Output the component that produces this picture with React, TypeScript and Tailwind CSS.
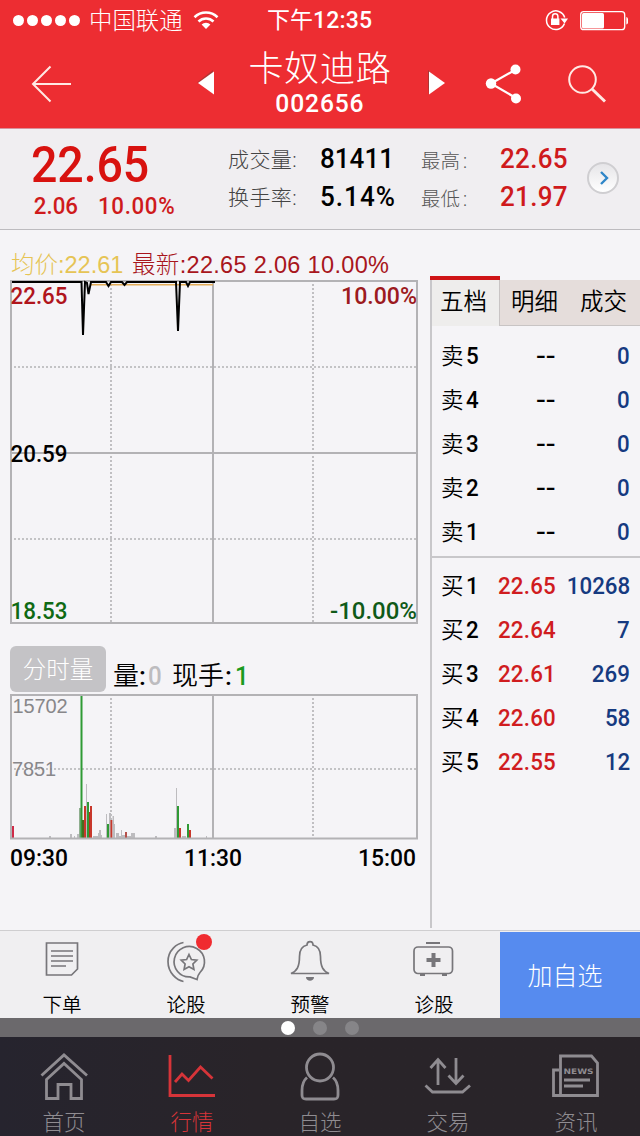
import type { ReactNode } from 'react';
import clsx from 'clsx';

const sellRows = ['5', '4', '3', '2', '1'];

const buyRows = [
  { level: '1', price: '22.65', volume: '10268' },
  { level: '2', price: '22.64', volume: '7' },
  { level: '3', price: '22.61', volume: '269' },
  { level: '4', price: '22.60', volume: '58' },
  { level: '5', price: '22.55', volume: '12' },
];

const GREY = '#bdbcbf';
const GREEN = '#2f9a35';
const RED = '#c8372b';

// [x, width, top, color], every bar stands on y = 838
const volumeBars: [number, number, number, string][] = [
  [12, 2, 826, '#cf2b48'],
  [49, 2, 836, GREY],
  [70, 2, 834, GREY],
  [74, 1, 836, GREY],
  [77, 3, 834, GREY],
  [79, 2, 808, '#8fae8f'],
  [80.5, 2, 696, GREEN],
  [82, 2, 820, '#4b6b1f'],
  [84, 2, 806, RED],
  [86, 1, 784, GREY],
  [87, 2, 802, GREEN],
  [89, 2, 812, '#b5341e'],
  [90, 2, 806, RED],
  [93, 5, 836, GREY],
  [98, 1, 833, GREY],
  [99, 2, 830, GREY],
  [101, 1, 835, GREY],
  [106, 1, 814, GREY],
  [107, 2, 824, GREEN],
  [109, 2, 813, GREY],
  [110.5, 2, 820, RED],
  [112.5, 1.5, 816, GREY],
  [114, 1, 824, GREY],
  [116, 3, 833, GREY],
  [119, 2, 836, GREY],
  [121, 1, 830, GREY],
  [122, 3, 835, GREY],
  [125, 2, 832, '#b5504a'],
  [127, 4, 836, GREY],
  [131, 4, 833, GREY],
  [155, 2, 836, GREY],
  [174, 2, 828, GREY],
  [176, 1, 788, GREY],
  [177, 2, 806, GREEN],
  [179, 2, 828, RED],
  [182, 4, 836, GREY],
  [187, 2, 824, GREEN],
  [189, 2, 830, RED],
  [206, 1, 836, GREY],
];

function Num({ children, className }: { children: ReactNode; className?: string }) {
  return (
    <span className={clsx("inline-block whitespace-nowrap font-['Roboto'] font-medium scale-x-[0.93]", className)}>
      {children}
    </span>
  );
}

function StatusBar() {
  return (
    <div className="flex h-10 items-center pl-[13px] pr-3 text-white">
      <div className="flex gap-[3px]">
        {[0, 1, 2, 3, 4].map((i) => (
          <span key={i} className="h-[11px] w-[11px] rounded-full bg-white" />
        ))}
      </div>
      <span className="ml-[9px] w-[104px] pt-0.5 text-[23.4px] leading-10">中国联通</span>
      <svg width="26" height="20" viewBox="0 0 26 20" fill="none" stroke="#fff">
        <path d="M1.500 7.200a16.500 16.500 0 0 1 23 0" strokeWidth="2.600" />
        <path d="M5.500 11.500a10.800 10.800 0 0 1 15 0" strokeWidth="2.600" />
        <path d="M8.600 14.600a6 6 0 0 1 8.800 0L13 19z" fill="#fff" stroke="none" />
      </svg>
      <span className="ml-[48px] w-[277px] pt-0.5 text-[23px] font-normal leading-10">
        下午<span className="font-['Roboto'] font-medium text-[23px] tracking-[0.2px]">12:35</span>
      </span>
      <svg width="84" height="22" viewBox="544 9 84 22" fill="none" stroke="#fff" className="shrink-0">
        <path d="M564.500 23.500a9.300 9.300 0 1 1 .2-6" strokeWidth="1.500" />
        <path d="M560.500 18.500h7.500l-3.400 5z" fill="#fff" stroke="none" />
        <path d="M552.500 19v-2.500a2.700 2.700 0 0 1 5.400 0V19" strokeWidth="1.500" />
        <rect x="551" y="18.500" width="8.400" height="6.500" fill="#fff" stroke="none" />
        <rect x="580.700" y="11.700" width="44" height="18" rx="3" strokeWidth="1.300" />
        <rect x="582" y="13" width="22" height="15.500" rx="1.500" fill="#fff" stroke="none" />
        <path d="M626.300 17c3 1 3 6.500 0 7.500z" fill="#fff" stroke="none" />
      </svg>
    </div>
  );
}

function TitleBar() {
  return (
    <div className="flex h-[88px] items-start pl-[30px] pr-[32px] text-white">
      <svg width="42" height="40" viewBox="0 0 42 40" fill="none" stroke="#ffe9e4" strokeWidth="2" className="mt-6">
        <path d="M20.500 2.500L3 20l17.500 17.500M3 20h38" />
      </svg>
      <svg width="20" height="28" viewBox="0 0 20 28" className="ml-[124px] mt-[29px]">
        <path d="M17 1L1 13.500l16 1z" fill="#8c3a35" opacity=".6" />
        <path d="M18 2.500v23L2 14z" fill="#fff" />
      </svg>
      <div className="ml-[30px] flex w-[148px] flex-col items-center">
        <span className="mt-2 whitespace-nowrap text-[35px] leading-[44px] tracking-[0.8px]">卡奴迪路</span>
        <Num className="-mt-[3px] text-[26.500px] leading-[28px] tracking-[0.9px]">002656</Num>
      </div>
      <svg width="20" height="28" viewBox="0 0 20 28" className="ml-[33px] mt-[29px]">
        <path d="M1 1v25l3-22z" fill="#8c3a35" opacity=".7" />
        <path d="M2 2.500L18 14 2 25.500z" fill="#fff" />
      </svg>
      <svg width="38" height="42" viewBox="0 0 38 42" fill="#fff" stroke="#fff" className="ml-[38px] mt-[23px]">
        <path d="M30 7L6 20.500 31 35" fill="none" strokeWidth="2.200" />
        <circle cx="30.500" cy="6.500" r="5" stroke="none" />
        <circle cx="6" cy="20.500" r="5.200" stroke="none" />
        <circle cx="31" cy="35.500" r="5" stroke="none" />
      </svg>
      <svg width="40" height="40" viewBox="0 0 40 40" fill="none" stroke="#ffe9e4" className="ml-[44px] mt-6">
        <circle cx="15.500" cy="15.500" r="13.300" strokeWidth="2" />
        <path d="M25 25l13 12.500" strokeWidth="3" />
      </svg>
    </div>
  );
}

function QuoteSummary() {
  return (
    <div className="flex h-[102px] border-b border-t border-b-[#bdbbbf] border-t-[#d8909a] bg-[#f0eef1]">
      <div className="w-[228px] pl-[31px] text-[#cf1a1c]">
        <Num className="block origin-left pt-2 text-[50px] leading-[56px] text-[#d8120f] tracking-[-0.1px]">22.65</Num>
        <div className="-mt-px flex text-[24px] leading-7">
          <Num className="w-[67px] origin-left pl-[3px]">2.06</Num>
          <Num className="origin-left tracking-[0.7px]">10.00%</Num>
        </div>
      </div>
      <div className="w-[92px] pt-3 text-[21px] leading-[38px] text-[#444] tracking-[0.4px]">
        <p>成交量:</p>
        <p>换手率:</p>
      </div>
      <div className="w-[101px] pt-[11px] text-[28px] leading-[38px] text-black">
        <Num className="block origin-left">81411</Num>
        <Num className="block origin-left tracking-[1.1px]">5.14%</Num>
      </div>
      <div className="w-[79px] pt-[14px] text-[19.500px] leading-[38px] text-[#555]">
        <p>最高<span className="ml-[3px]">:</span></p>
        <p>最低<span className="ml-[3px]">:</span></p>
      </div>
      <div className="w-[87px] pt-[11px] text-[28px] leading-[38px] text-[#cf1a1c]">
        <Num className="block origin-left tracking-[0.3px]">22.65</Num>
        <Num className="block origin-left tracking-[0.3px]">21.97</Num>
      </div>
      <div className="mt-[33px] flex h-8 w-8 items-center justify-center rounded-full border-2 border-[#cfced1] bg-gradient-to-b from-[#e6e5e8] to-white">
        <svg width="12" height="16" viewBox="0 0 12 16" fill="none" stroke="#2f86c8" strokeWidth="2.400" className="ml-0.5">
          <path d="M3 2l6 6-6 6" />
        </svg>
      </div>
    </div>
  );
}

function PriceChart() {
  return (
    <svg width="430" height="348" viewBox="0 278 430 348" className="block">
      <g fill="none" stroke="#b3b2b5" strokeWidth="2">
        <rect x="11" y="281" width="406" height="342" />
        <path d="M11 453H417M213 281V623" />
        <path d="M14 367H417M14 539H417M111 284V623M313 284V623" strokeDasharray="2 2" strokeWidth="1.600" />
      </g>
      <path d="M90 284.800H213" stroke="#e3ad5a" strokeWidth="1.500" />
      <path
        d="M12 282H81.500L83 335L85 282L87 283L88.500 294L91 282H106L108.500 286L111 282H122L124.500 285L127 282H176L178 331L180 282H186L188 286L190 282H215"
        fill="none"
        stroke="#000"
        strokeWidth="2"
      />
      <g className="font-['Roboto'] font-medium" fontSize="24">
        <text x="10.500" y="304" fill="#b0151c" textLength="57" lengthAdjust="spacingAndGlyphs">22.65</text>
        <text x="341" y="304" fill="#9c1a20" textLength="76" lengthAdjust="spacingAndGlyphs">10.00%</text>
        <text x="10.500" y="462" fill="#000" textLength="57" lengthAdjust="spacingAndGlyphs">20.59</text>
        <text x="10.500" y="619" fill="#0f6a14" textLength="57" lengthAdjust="spacingAndGlyphs">18.53</text>
        <text x="330" y="619" fill="#0f5a18" textLength="87" lengthAdjust="spacingAndGlyphs">-10.00%</text>
      </g>
    </svg>
  );
}

function VolumeChart() {
  return (
    <svg width="430" height="180" viewBox="0 694 430 180" className="block">
      <g fill="none" stroke="#b3b2b5" strokeWidth="2">
        <path d="M213 695V838" />
        <path d="M14 769H417M111 698V838M313 698V838" strokeDasharray="2 2" strokeWidth="1.600" />
      </g>
      {volumeBars.map(([x, width, top, color], i) => (
        <rect key={i} x={x} y={top} width={width} height={838 - top} fill={color} />
      ))}
      <rect x="11" y="695" width="406" height="143.500" fill="none" stroke="#b3b2b5" strokeWidth="2" />
      <g className="font-['Liberation_Sans']" fontSize="20" fill="#88878a">
        <text x="12.500" y="713" textLength="55">15702</text>
        <text x="12" y="776" textLength="44">7851</text>
      </g>
      <g className="font-['Roboto'] font-medium" fontSize="24" fill="#000">
        <text x="10" y="866" textLength="58" lengthAdjust="spacingAndGlyphs">09:30</text>
        <text x="184" y="866" textLength="58" lengthAdjust="spacingAndGlyphs">11:30</text>
        <text x="358" y="866" textLength="58" lengthAdjust="spacingAndGlyphs">15:00</text>
      </g>
    </svg>
  );
}

function ChartPanel() {
  return (
    <div className="w-[430px] pt-[18px]">
      <div className="flex h-[30px] whitespace-nowrap pl-[11px] font-['Liberation_Sans','Noto_Sans_CJK_SC',sans-serif] text-[23.500px] leading-[34px]">
        <span className="w-[121px] text-[#e6c455]">均价:22.61</span>
        <span className="text-[#a8161d] tracking-[0.32px]">最新:22.65 2.06 10.00%</span>
      </div>
      <PriceChart />
      <div className="flex h-[68px] pl-2.5 pt-5 text-[26px] text-black">
        <div className="flex h-[46px] w-24 items-center justify-center rounded-md bg-[#c4c3c6] pt-1 text-[23.500px] text-white">
          分时量
        </div>
        <p className="ml-[7px] flex whitespace-nowrap font-[350] leading-[60px]">
          量<span className="font-medium">:</span>
          <Num className="ml-0.5 w-[22px] origin-left text-[#bdbcbf]">0</Num>
          <span className="ml-0.5">现手</span>
          <span className="ml-px font-medium">:</span>
          <Num className="ml-[3px] origin-left text-[#1a9a20]">1</Num>
        </p>
      </div>
      <VolumeChart />
    </div>
  );
}

function OrderBook() {
  return (
    <div className="flex flex-1 flex-col pt-[46px] font-[350]">
      <div className="flex h-[50px] text-[23.500px] leading-[45px] text-black">
        <div className="w-[70px] border-t-4 border-[#cf1417] bg-[#eeedec]">
          <div className="h-full border-l-2 border-[#c8c7ca] pl-2">五档</div>
        </div>
        <div className="mt-1 flex flex-1 border-b border-l border-[#c8c4c4] bg-[#e5dddb] -ml-px">
          <span className="w-[69px] pl-[11px]">明细</span>
          <span className="pl-[11px]">成交</span>
        </div>
      </div>
      <div className="h-[602px] border-l-2 border-[#c8c7ca] text-[23px] text-black">
        <div className="h-[232px] border-b-2 border-[#c8c7ca] pt-2">
          {sellRows.map((level) => (
            <div key={level} className="flex h-11 items-center pl-[9px] pr-2.5">
              <span className="flex w-[95px]">
                <span className="pt-0.5 text-[22.500px]">卖</span>
                <Num className="ml-0.5 origin-left text-[24px]">{level}</Num>
              </span>
              <Num className="origin-left scale-x-[1.2] text-[24px]">--</Num>
              <Num className="ml-auto origin-right text-[24px] text-[#163a80]">0</Num>
            </div>
          ))}
        </div>
        <div className="pt-1.5">
          {buyRows.map((row) => (
            <div key={row.level} className="flex h-11 items-center pl-[9px] pr-2.5">
              <span className="flex w-[57px]">
                <span className="pt-0.5 text-[22.500px]">买</span>
                <Num className="ml-0.5 origin-left text-[24px]">{row.level}</Num>
              </span>
              <Num className="origin-left text-[24px] text-[#d01c1f] tracking-[0.2px]">{row.price}</Num>
              <Num className="ml-auto origin-right text-[24px] text-[#163a80]">{row.volume}</Num>
            </div>
          ))}
        </div>
      </div>
    </div>
  );
}

function ActionItem({ label, badge, children }: { label: string; badge?: boolean; children: ReactNode }) {
  return (
    <div className="flex w-[124px] flex-col items-center pt-2">
      <div className="relative">
        <svg width="44" height="44" viewBox="0 0 44 44" fill="none" stroke="#77767a" strokeWidth="1.700">
          {children}
        </svg>
        {badge && <span className="absolute -top-[5px] left-[32px] h-4 w-4 rounded-full bg-[#f02b30]" />}
      </div>
      <span className="mt-[10px] text-[19.500px] font-[350] leading-[26px] text-black">{label}</span>
    </div>
  );
}

function ActionBar() {
  return (
    <div className="flex h-[88px] border-t border-[#cfced0] bg-[#f0eff1]">
      <ActionItem label="下单">
        <path d="M6.500 4h31v26l-6 6H6.500z" />
        <path d="M11 12h22M11 17h22M11 22h22M11 27h15" />
      </ActionItem>
      <ActionItem label="论股" badge>
        <path d="M19.500 3.500C13 4.500 4 11 4 22.500S13 41.500 19.500 42.500" />
        <path d="M33 40.500l-7-2.600A15.200 15.200 0 1 1 36 33.500c-1.800 2-2.600 4.500-3 7z" />
        <path d="M25 15.500l2.400 5 5.400.7-3.900 3.800 1 5.400-4.900-2.600-4.900 2.600 1-5.400-3.900-3.800 5.400-.7z" />
      </ActionItem>
      <ActionItem label="预警">
        <path d="M3 34.500h38c-6-2.500-8.500-7-8.500-17 0-7-3-10.500-7.500-11.500 0-4.500-6-4.500-6 0-4.500 1-7.500 4.500-7.500 11.500 0 10-2.500 14.500-8.500 17z" />
        <path d="M18 38h8c0 5-8 5-8 0z" fill="#77767a" stroke="none" />
      </ActionItem>
      <ActionItem label="诊股">
        <rect x="2" y="8" width="38.500" height="26.500" rx="4" />
        <path d="M14 4h14M8 36h5M30 36h5" strokeWidth="2" />
        <path d="M21.500 14v14M14.500 21h14" strokeWidth="4" />
      </ActionItem>
      <button className="ml-1 mt-px flex-1 bg-[#568bef] pr-2.5 pt-1 text-[25px] text-white">加自选</button>
    </div>
  );
}

function PagerDots() {
  return (
    <div className="flex h-[19px] items-center justify-center gap-[18px] bg-[#6b696c]">
      <span className="h-3.5 w-3.5 rounded-full bg-white" />
      <span className="h-3.5 w-3.5 rounded-full bg-[#868588]" />
      <span className="h-3.5 w-3.5 rounded-full bg-[#868588]" />
    </div>
  );
}

function TabItem({ label, active, children }: { label: string; active?: boolean; children: ReactNode }) {
  return (
    <div className={clsx('flex flex-1 flex-col items-center pt-3', active ? 'text-[#d63439]' : 'text-[#8f8c91]')}>
      <svg width="50" height="52" viewBox="0 0 50 52" fill="none" stroke="currentColor" strokeWidth="2.800" className="shrink-0">
        {children}
      </svg>
      <span className="mt-[3px] shrink-0 text-[21.500px] leading-[38px]">{label}</span>
    </div>
  );
}

function TabBar() {
  return (
    <div className="flex h-[99px] bg-gradient-to-r from-[#26242e] to-[#292429] to-40%">
      <TabItem label="首页">
        <path d="M2.500 26.500L25 6l23 20.500" />
        <path d="M7.500 30.500L25 14.500l17.500 16V49.500H32V35.500H19V49.500H7.500z" />
      </TabItem>
      <TabItem label="行情" active>
        <path d="M3 6v40.500H48" />
        <path d="M8 33l7-8 6.500 6.500L33.500 18l12 11.500" />
      </TabItem>
      <TabItem label="自选">
        <circle cx="25" cy="18.500" r="13.500" />
        <path d="M12 28.500c-3.500 3-5 7-5 13v4.500c0 3 1 4 4 4h28c3 0 4-1 4-4v-4.500c0-6-1.500-10-5-13" />
      </TabItem>
      <TabItem label="交易">
        <path d="M15 36V11M7.500 19l7.500-8.500 7.500 8.500M33 9v25M25.500 26.500L33 34.500l7.500-8M2.500 36.500l7 6.500h30l7.500-6.500" />
      </TabItem>
      <TabItem label="资讯">
        <path d="M9.500 7h31l6 7v32.500h-37zM8 21H2.500v25.500h7M13 31h26M13 37h19" />
        <text
          x="12.500"
          y="25"
          fontSize="7.500"
          fill="currentColor"
          stroke="none"
          textLength="30"
          lengthAdjust="spacingAndGlyphs"
          className="font-['DejaVu_Sans'] font-bold"
        >
          NEWS
        </text>
      </TabItem>
    </div>
  );
}

export default function App() {
  return (
    <div className="flex h-[1136px] w-[640px] flex-col overflow-hidden bg-[#f5f4f7] font-['Roboto','Noto_Sans_CJK_SC',sans-serif] font-light">
      <header className="bg-[#ed2d32]">
        <StatusBar />
        <TitleBar />
      </header>
      <QuoteSummary />
      <main className="flex h-[700px]">
        <ChartPanel />
        <OrderBook />
      </main>
      <ActionBar />
      <PagerDots />
      <TabBar />
    </div>
  );
}
